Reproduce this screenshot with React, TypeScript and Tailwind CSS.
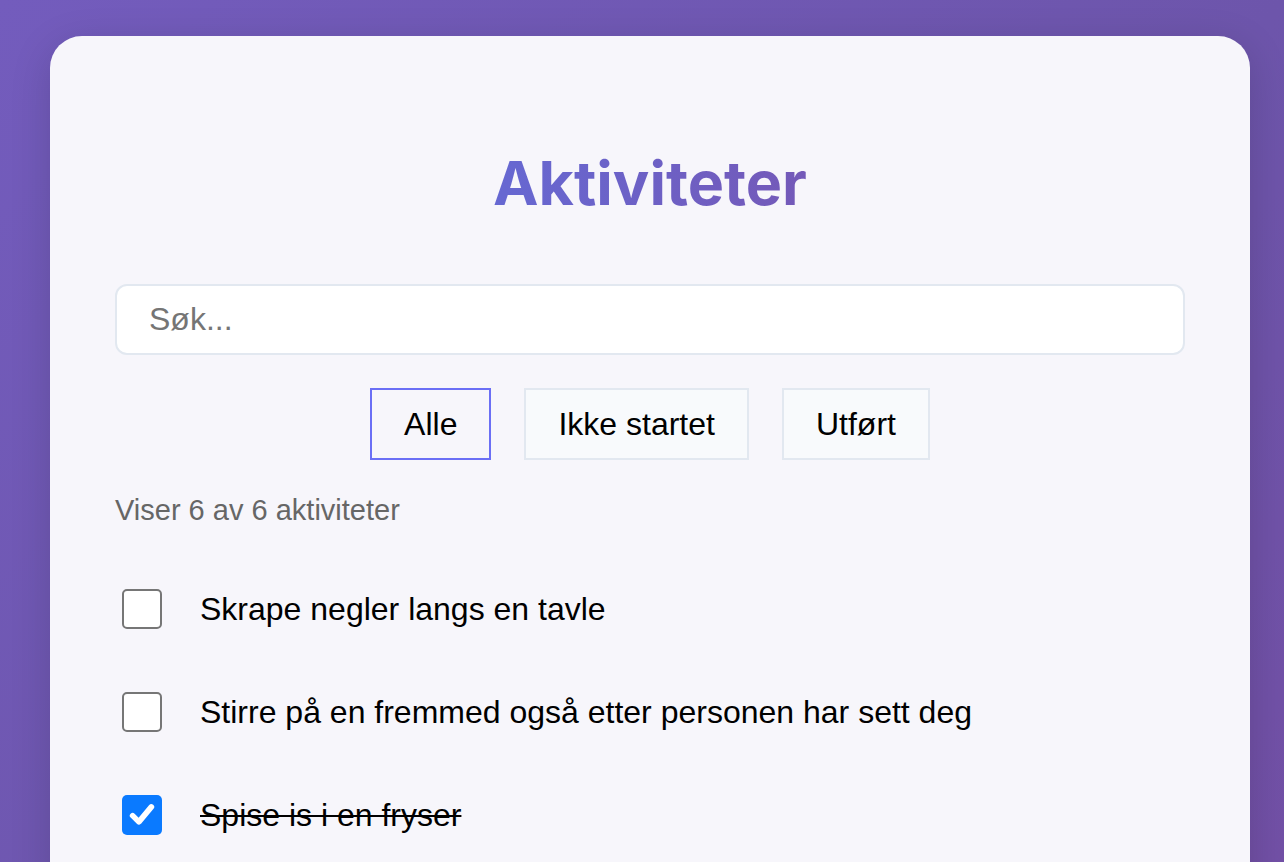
import { useState } from 'react'

const activities = [
  { id: 1, title: 'Skrape negler langs en tavle', done: false },
  { id: 2, title: 'Stirre på en fremmed også etter personen har sett deg', done: false },
  { id: 3, title: 'Spise is i en fryser', done: true },
  { id: 4, title: 'Synge høyt på bussen', done: false },
  { id: 5, title: 'Gå baklengs gjennom byen', done: true },
  { id: 6, title: 'Klappe når flyet lander', done: false },
]

const filters = ['Alle', 'Ikke startet', 'Utført']

export default function App() {
  const [items, setItems] = useState(activities)
  const [filter, setFilter] = useState('Alle')
  const [query, setQuery] = useState('')

  const shown = items.filter((a) => {
    if (filter === 'Ikke startet' && a.done) return false
    if (filter === 'Utført' && !a.done) return false
    return a.title.toLowerCase().includes(query.toLowerCase())
  })

  return (
    <div className="h-screen w-screen overflow-hidden bg-[linear-gradient(135deg,#735cbd_0%,#6d55ab_60%,#7250a6_100%)] pl-[50px] pt-[36px] font-['Liberation_Sans',Arial,sans-serif]">
      <div className="w-[1200px] rounded-[32px] bg-[#f7f6fb] px-[65px] pt-[110px] pb-16 shadow-[0_10px_40px_rgba(0,0,0,0.15)]">
        <h1 className="text-center font-['Inter',sans-serif] text-[61px] leading-[74px] font-bold">
          <span className="bg-[linear-gradient(90deg,#6668d2,#7459b8)] bg-clip-text text-transparent">
            Aktiviteter
          </span>
        </h1>

        {/* Search */}
        <input
          value={query}
          onChange={(e) => setQuery(e.target.value)}
          placeholder="Søk..."
          className="mt-[64px] block h-[71px] w-full rounded-xl border-2 border-[#e2e8f0] bg-white px-[32px] text-[32px] text-black outline-none placeholder:text-[#757575]"
        />

        {/* Filters */}
        <div className="mt-[33px] flex justify-center gap-[33px]">
          {filters.map((f) => (
            <button
              key={f}
              onClick={() => setFilter(f)}
              className={
                f === filter
                  ? 'h-[72px] border-2 border-[#6b6ff5] bg-[#f7f6fb] px-[32px] text-[32px] text-black'
                  : 'h-[72px] border-2 border-[#e2e8f0] bg-[#f8fafc] px-[32px] text-[32px] text-black'
              }
            >
              {f}
            </button>
          ))}
        </div>

        <p className="mt-[33px] text-[29px] leading-[34px] text-[#666]">
          Viser {shown.length} av {items.length} aktiviteter
        </p>

        {/* List */}
        <ul className="mt-[30px]">
          {shown.map((a) => (
            <li key={a.id} className="flex h-[103px] items-center gap-[38px] px-[7px]">
              <button
                onClick={() =>
                  setItems(items.map((x) => (x.id === a.id ? { ...x, done: !x.done } : x)))
                }
                className={
                  a.done
                    ? 'flex h-[40px] w-[40px] shrink-0 items-center justify-center rounded-[5px] bg-[#0a7aff]'
                    : 'h-[40px] w-[40px] shrink-0 rounded-[5px] border-2 border-[#767676] bg-white'
                }
              >
                {a.done && (
                  <svg viewBox="0 0 24 24" className="h-[30px] w-[30px]" fill="none" stroke="white" strokeWidth="4.5" strokeLinecap="round" strokeLinejoin="round">
                    <path d="M4.5 12.5l5 5L19.5 5.5" />
                  </svg>
                )}
              </button>
              <span className={a.done ? 'text-[32px] text-black line-through decoration-2' : 'text-[32px] text-black'}>
                {a.title}
              </span>
            </li>
          ))}
        </ul>
      </div>
    </div>
  )
}
